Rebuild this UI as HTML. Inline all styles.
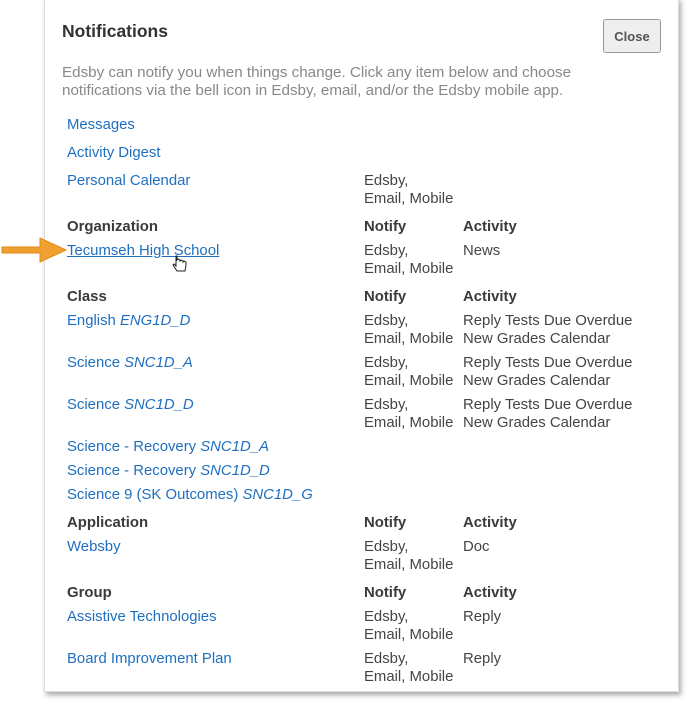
<!DOCTYPE html>
<html><head><style>
body{margin:0;width:687px;height:701px;background:#fff;position:relative;overflow:hidden;font-family:"Liberation Sans",sans-serif;}
.panel{position:absolute;left:44px;top:-2px;width:633px;height:692px;background:#fff;border:1px solid #ddd;box-shadow:2px 3px 5px rgba(0,0,0,.35);}
.t{position:absolute;font-size:14.9px;line-height:18px;color:#444;white-space:nowrap;}
.a{color:#1f6fc0;}
.b{font-weight:bold;color:#3a3a3a;}
h1{position:absolute;left:62px;top:21px;margin:0;font-size:17.5px;color:#333;}
.close{position:absolute;left:603px;top:19px;width:58px;height:34px;border:1px solid #999;border-radius:3px;background:#eee;font-size:13px;font-weight:bold;color:#555;text-align:center;line-height:33px;box-sizing:border-box;}
.desc{position:absolute;left:62px;top:64px;font-size:15.2px;line-height:18px;color:#888;white-space:nowrap;}
</style></head><body>
<div class="panel"></div>
<h1>Notifications</h1>
<div class="close">Close</div>
<div class="desc">Edsby can notify you when things change. Click any item below and choose<br>notifications via the bell icon in Edsby, email, and/or the Edsby mobile app.</div>

<div class="t a" style="left:67px;top:116px">Messages</div>
<div class="t a" style="left:67px;top:144px">Activity Digest</div>
<div class="t a" style="left:67px;top:172px">Personal Calendar</div>
<div class="t" style="left:364px;top:172px">Edsby,<br>Email, Mobile</div>

<div class="t b" style="left:67px;top:218px">Organization</div>
<div class="t b" style="left:364px;top:218px">Notify</div>
<div class="t b" style="left:463px;top:218px">Activity</div>
<div class="t a" style="left:67px;top:242px;text-decoration:underline">Tecumseh High School</div>
<div class="t" style="left:364px;top:242px">Edsby,<br>Email, Mobile</div>
<div class="t" style="left:463px;top:242px">News</div>

<div class="t b" style="left:67px;top:288px">Class</div>
<div class="t b" style="left:364px;top:288px">Notify</div>
<div class="t b" style="left:463px;top:288px">Activity</div>
<div class="t a" style="left:67px;top:312px">English <i>ENG1D_D</i></div>
<div class="t" style="left:364px;top:312px">Edsby,<br>Email, Mobile</div>
<div class="t" style="left:463px;top:312px">Reply Tests Due Overdue<br>New Grades Calendar</div>
<div class="t a" style="left:67px;top:354px">Science <i>SNC1D_A</i></div>
<div class="t" style="left:364px;top:354px">Edsby,<br>Email, Mobile</div>
<div class="t" style="left:463px;top:354px">Reply Tests Due Overdue<br>New Grades Calendar</div>
<div class="t a" style="left:67px;top:396px">Science <i>SNC1D_D</i></div>
<div class="t" style="left:364px;top:396px">Edsby,<br>Email, Mobile</div>
<div class="t" style="left:463px;top:396px">Reply Tests Due Overdue<br>New Grades Calendar</div>
<div class="t a" style="left:67px;top:438px">Science - Recovery <i>SNC1D_A</i></div>
<div class="t a" style="left:67px;top:462px">Science - Recovery <i>SNC1D_D</i></div>
<div class="t a" style="left:67px;top:486px">Science 9 (SK Outcomes) <i>SNC1D_G</i></div>

<div class="t b" style="left:67px;top:514px">Application</div>
<div class="t b" style="left:364px;top:514px">Notify</div>
<div class="t b" style="left:463px;top:514px">Activity</div>
<div class="t a" style="left:67px;top:538px">Websby</div>
<div class="t" style="left:364px;top:538px">Edsby,<br>Email, Mobile</div>
<div class="t" style="left:463px;top:538px">Doc</div>

<div class="t b" style="left:67px;top:584px">Group</div>
<div class="t b" style="left:364px;top:584px">Notify</div>
<div class="t b" style="left:463px;top:584px">Activity</div>
<div class="t a" style="left:67px;top:608px">Assistive Technologies</div>
<div class="t" style="left:364px;top:608px">Edsby,<br>Email, Mobile</div>
<div class="t" style="left:463px;top:608px">Reply</div>
<div class="t a" style="left:67px;top:650px">Board Improvement Plan</div>
<div class="t" style="left:364px;top:650px">Edsby,<br>Email, Mobile</div>
<div class="t" style="left:463px;top:650px">Reply</div>

<svg style="position:absolute;left:0;top:236px" width="75" height="32">
<path d="M2 17 H40 V26 L66 14 L40 2 V11 H2 Z" fill="#f0a030" stroke="#e08a10" stroke-width="1"/>
</svg>
<svg style="position:absolute;left:171px;top:254px" width="18" height="20">
<path d="M5 2 v10 l-2-2 l-1 1 l4 6 h8 l1-6 v-3 l-2-1 l-1 1 v-1 l-2-1 l-1 1 v-1 l-2-1 l-1 1 v-4 z" fill="#fff" stroke="#222" stroke-width="1"/>
</svg>
</body></html>
